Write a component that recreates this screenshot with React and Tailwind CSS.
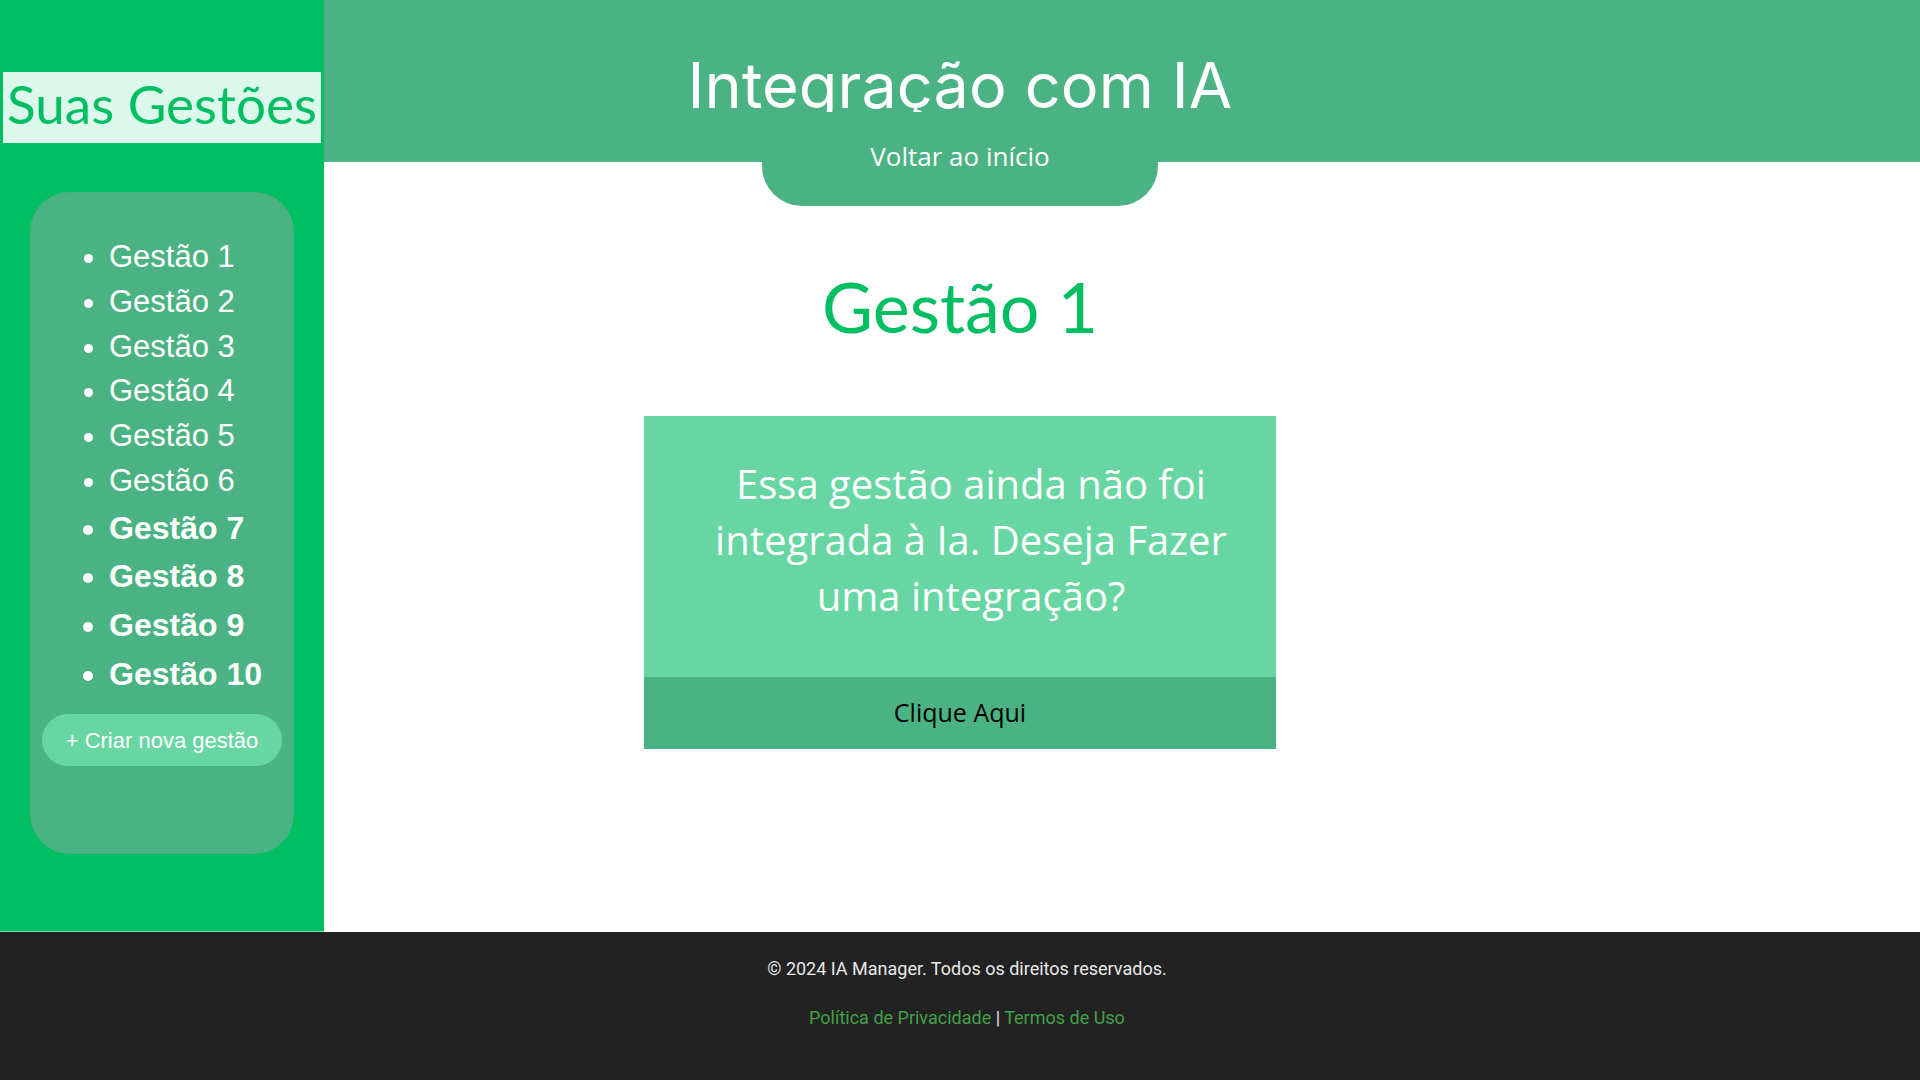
import React from 'react';

const gestoes = [
  { name: 'Gestão 1', bold: false },
  { name: 'Gestão 2', bold: false },
  { name: 'Gestão 3', bold: false },
  { name: 'Gestão 4', bold: false },
  { name: 'Gestão 5', bold: false },
  { name: 'Gestão 6', bold: false },
  { name: 'Gestão 7', bold: true },
  { name: 'Gestão 8', bold: true },
  { name: 'Gestão 9', bold: true },
  { name: 'Gestão 10', bold: true },
];

function Sidebar() {
  return (
    <aside className="flex w-[324px] shrink-0 flex-col border-b border-[#7fe0b2] bg-[#00bf63]">
      <h2 className="mx-[3px] mt-[72px] h-[71px] w-[318px] bg-[#dcf7eb] text-center font-['Lato',sans-serif] text-[53px] leading-[63px] text-[#00bf63]">
        Suas Gestões
      </h2>

      {/* painel com a lista de gestões */}
      <div className="ml-[30px] mt-[49px] flex h-[662px] w-[264px] flex-col rounded-[40px] bg-[#4bb383] pt-[43px] font-['Liberation_Sans',Arial,sans-serif] text-white">
        <ul className="list-disc pl-[79px]">
          {gestoes.map((g) => (
            <li
              key={g.name}
              className={g.bold ? 'text-[32px] font-bold leading-[48.6px]' : 'text-[31px] leading-[44.8px]'}
            >
              {g.name}
            </li>
          ))}
        </ul>
        <button
          type="button"
          className="mx-auto mt-[16px] h-[52px] w-[240px] rounded-full bg-[#68d6a3] text-[22px] text-white"
        >
          + Criar nova gestão
        </button>
      </div>
    </aside>
  );
}

export default function App() {
  return (
    <div className="flex min-h-screen flex-col bg-white">
      <div className="flex h-[932px]">
        <Sidebar />

        <main className="flex flex-1 flex-col">
          <header className="flex h-[162px] flex-col items-center bg-[#4bb383] pr-[324px]">
            <h1 className="pt-[54px] font-['Inter',sans-serif] text-[63px] leading-[63px] tracking-[0.1px] text-white">
              Integração com IA
            </h1>
            <a
              href="#"
              className="relative z-10 -mt-[5px] block h-[94px] w-[396px] shrink-0 rounded-b-[40px] bg-[#4bb383] pt-[31px] text-center font-['Open_Sans',sans-serif] text-[26px] leading-[26px] text-white"
            >
              Voltar ao início
            </a>
          </header>

          <section className="flex flex-col items-center pr-[324px]">
            <h2 className="mt-[109px] font-['Lato',sans-serif] text-[70px] leading-[70px] text-[#00bf63]">Gestão 1</h2>

            <div className="mt-[75px] w-[632px] font-['Open_Sans',sans-serif]">
              <div className="h-[261px] bg-[#68d6a3] pl-[50px] pr-[28px] pt-[40px] text-center text-[40px] leading-[56px] text-white">
                Essa gestão ainda não foi integrada à Ia. Deseja Fazer uma integração?
              </div>
              <button type="button" className="flex h-[72px] w-full items-center justify-center bg-[#4bb383] text-[25px] text-black">
                Clique Aqui
              </button>
            </div>
          </section>
        </main>
      </div>

      <footer className="flex h-[148px] flex-col items-center bg-[#222222] pl-[14px] pt-[25px] font-['Roboto',sans-serif] text-[18px] text-[#e8e8e8]">
        <p className="leading-[24px]">© 2024 IA Manager. Todos os direitos reservados.</p>
        <p className="mt-[25px] leading-[24px]">
          <a href="#" className="text-[#43a047]">Política de Privacidade</a>
          {' | '}
          <a href="#" className="text-[#43a047]">Termos de Uso</a>
        </p>
      </footer>
    </div>
  );
}
